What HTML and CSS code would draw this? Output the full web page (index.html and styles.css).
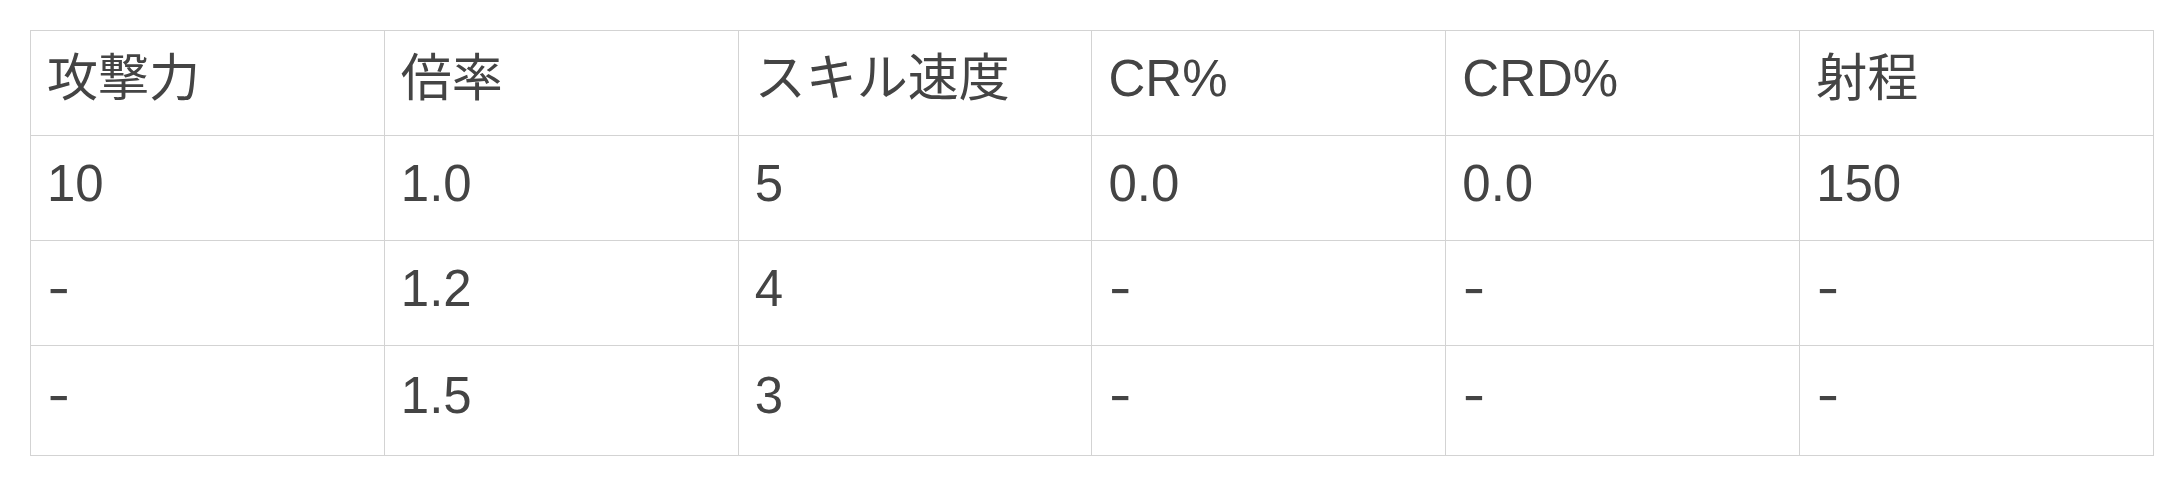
FILE: index.html
```html
<!DOCTYPE html>
<html lang="ja">
<head>
<meta charset="utf-8">
<link rel="stylesheet" href="styles.css">
</head>
<body>
<div class="wrap">
<table class="stats">
<thead>
<tr><th>攻撃力</th><th>倍率</th><th>スキル速度</th><th>CR%</th><th>CRD%</th><th>射程</th></tr>
</thead>
<tbody>
<tr><td>10</td><td>1.0</td><td>5</td><td>0.0</td><td>0.0</td><td>150</td></tr>
<tr><td class="dash">-</td><td>1.2</td><td>4</td><td class="dash">-</td><td class="dash">-</td><td class="dash">-</td></tr>
<tr class="last"><td class="dash">-</td><td>1.5</td><td>3</td><td class="dash">-</td><td class="dash">-</td><td class="dash">-</td></tr>
</tbody>
</table>
</div>
</body>
</html>
```
FILE: styles.css
```css
html, body {
  margin: 0;
  padding: 0;
  background: #ffffff;
}
.wrap {
  padding: 30px 21px 0 30px;
}
.stats {
  width: 2124px;
  border-collapse: collapse;
  table-layout: fixed;
  font-family: "Liberation Sans", "Noto Sans CJK JP", sans-serif;
  font-size: 51px;
  line-height: 60px;
  color: #444444;
}
.stats th, .stats td {
  border: 1.5px solid #d3d3d3;
  text-align: left;
  font-weight: normal;
  padding: 0 16px 9px 16px;
  height: 95px;
  vertical-align: middle;
}
.stats td.dash {
  font-family: "Inter", "Liberation Sans", sans-serif;
}
.stats .last td {
  height: 100px;
}
```
